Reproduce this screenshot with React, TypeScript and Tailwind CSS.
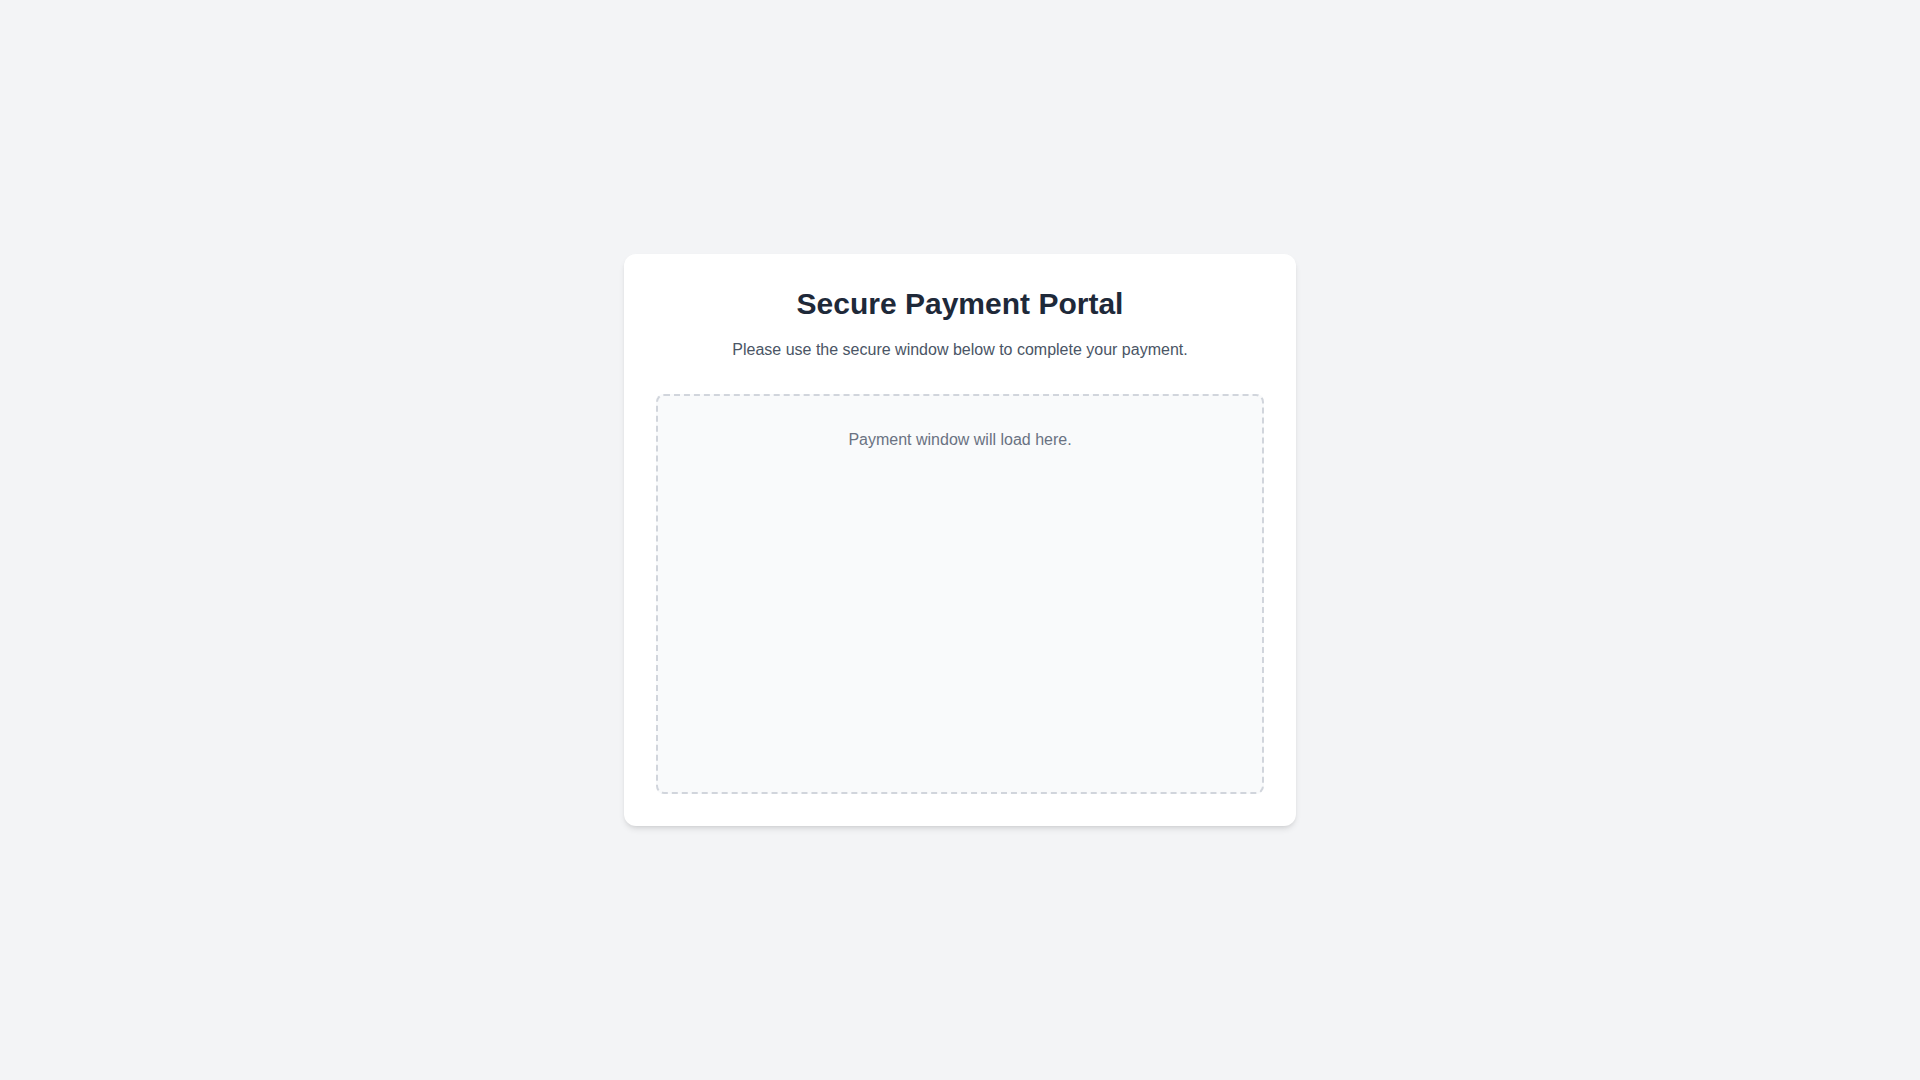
export default function App() {
  return (
    <div
      className="min-h-screen bg-gray-100 flex items-center justify-center"
      style={{ fontFamily: '"Liberation Sans", Arial, sans-serif' }}
    >
      <div className="w-full max-w-2xl bg-white rounded-xl shadow-md p-8 text-center">
        <h1 className="text-3xl font-bold text-gray-800 mb-4">Secure Payment Portal</h1>
        <p className="text-base text-gray-600 mb-8">
          Please use the secure window below to complete your payment.
        </p>
        <div className="h-[400px] border-2 border-dashed border-gray-300 rounded-lg bg-gray-50 p-8">
          <p className="text-base text-gray-500">Payment window will load here.</p>
        </div>
      </div>
    </div>
  );
}
